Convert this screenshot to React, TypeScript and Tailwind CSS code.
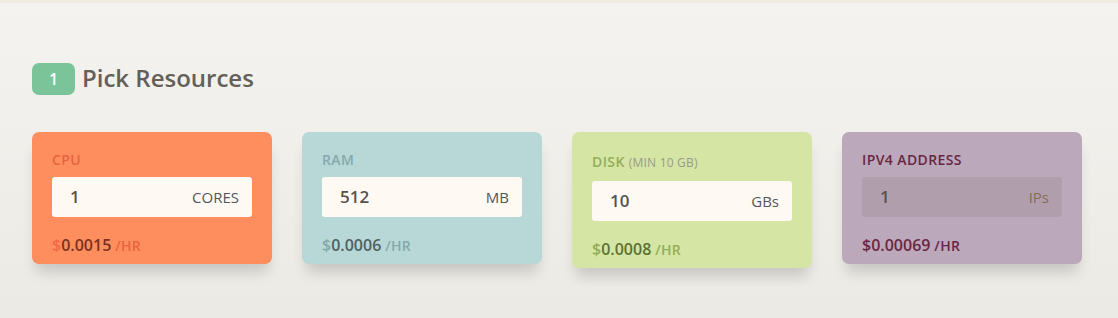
import React from "react";

type Card = {
  bg: string;
  labelColor: string;
  label: React.ReactNode;
  value: string;
  unit: string;
  inputCls: string;
  unitColor: string;
  dollar: string;
  num: string;
  hr: string;
  price: string;
  labelLeading: string;
};

export default function App() {
  const cards: Card[] = [
    {
      bg: "bg-[#ff8e5e]",
      labelColor: "text-[#e8643e]",
      label: <span>CPU</span>,
      value: "1",
      unit: "CORES",
      inputCls: "bg-[#fefaf3]",
      unitColor: "text-[#55555c]",
      dollar: "text-[#ef6a45]",
      num: "text-[#7a3320]",
      hr: "text-[#e8643e]",
      price: "0.0015",
      labelLeading: "leading-[16px]",
    },
    {
      bg: "bg-[#b8d8d8]",
      labelColor: "text-[#86a9aa]",
      label: <span>RAM</span>,
      value: "512",
      unit: "MB",
      inputCls: "bg-[#fefaf3]",
      unitColor: "text-[#55555c]",
      dollar: "text-[#86a9aa]",
      num: "text-[#4f5f5f]",
      hr: "text-[#86a9aa]",
      price: "0.0006",
      labelLeading: "leading-[16px]",
    },
    {
      bg: "bg-[#d5e5a3]",
      labelColor: "text-[#93ad5b]",
      label: (
        <span>
          DISK{" "}
          <span className="text-[12px] font-normal tracking-[0.2px] text-[#9a9a8c]">
            (MIN 10 GB)
          </span>
        </span>
      ),
      value: "10",
      unit: "GBs",
      inputCls: "bg-[#fefaf3]",
      unitColor: "text-[#55555c]",
      dollar: "text-[#93ad5b]",
      num: "text-[#5d7134]",
      hr: "text-[#93ad5b]",
      price: "0.0008",
      labelLeading: "leading-[19px]",
    },
    {
      bg: "bg-[#bba8bb]",
      labelColor: "text-[#6a2641]",
      label: <span>IPV4 ADDRESS</span>,
      value: "1",
      unit: "IPs",
      inputCls: "bg-[#b09ead]",
      unitColor: "text-[#8a6b52]",
      dollar: "text-[#6a2641]",
      num: "text-[#6a2641]",
      hr: "text-[#6a2641]",
      price: "0.00069",
      labelLeading: "leading-[16px]",
    },
  ];

  return (
    <div
      className="w-[1118px] h-[318px] overflow-hidden bg-gradient-to-b from-[#f4f3ef] to-[#ebeae5] border-t-[3px] border-[#f0ecde]"
      style={{ fontFamily: '"Open Sans", "Noto Sans", sans-serif' }}
    >
      <div className="px-8 pt-[60px]">
        <div className="flex items-center gap-[7px]">
          <div className="w-[43px] h-[32px] rounded-[7px] bg-[#7bc49a] flex items-center justify-center text-white text-[16px] font-semibold">
            1
          </div>
          <div className="text-[24px] font-semibold text-[#645f59] leading-none -mt-[3px]">
            Pick Resources
          </div>
        </div>
        <div className="mt-[37px] flex items-start gap-[30px]">
          {cards.map((c, i) => (
            <div
              key={i}
              className={`w-[240px] ${c.bg} rounded-[7px] px-5 pt-5 pb-[10px] shadow-[0_12px_14px_-4px_rgba(0,0,0,0.16)]`}
            >
              <div
                className={`text-[14px] font-semibold tracking-[0.4px] ${c.labelLeading} ${c.labelColor}`}
              >
                {c.label}
              </div>
              <div
                className={`mt-[9px] h-10 rounded-[3px] ${c.inputCls} flex items-center justify-between pl-[18px] pr-[13px]`}
              >
                <span className="text-[17px] font-semibold text-[#57524d]">
                  {c.value}
                </span>
                <span className={`text-[15px] ${c.unitColor}`}>{c.unit}</span>
              </div>
              <div className="mt-[20px] leading-[17px] font-semibold">
                <span className={`text-[16px] ${c.dollar}`}>$</span>
                <span className={`text-[16px] ${c.num}`}>{c.price}</span>
                <span className={`text-[14px] tracking-[0.3px] ${c.hr}`}> /HR</span>
              </div>
            </div>
          ))}
        </div>
      </div>
    </div>
  );
}
